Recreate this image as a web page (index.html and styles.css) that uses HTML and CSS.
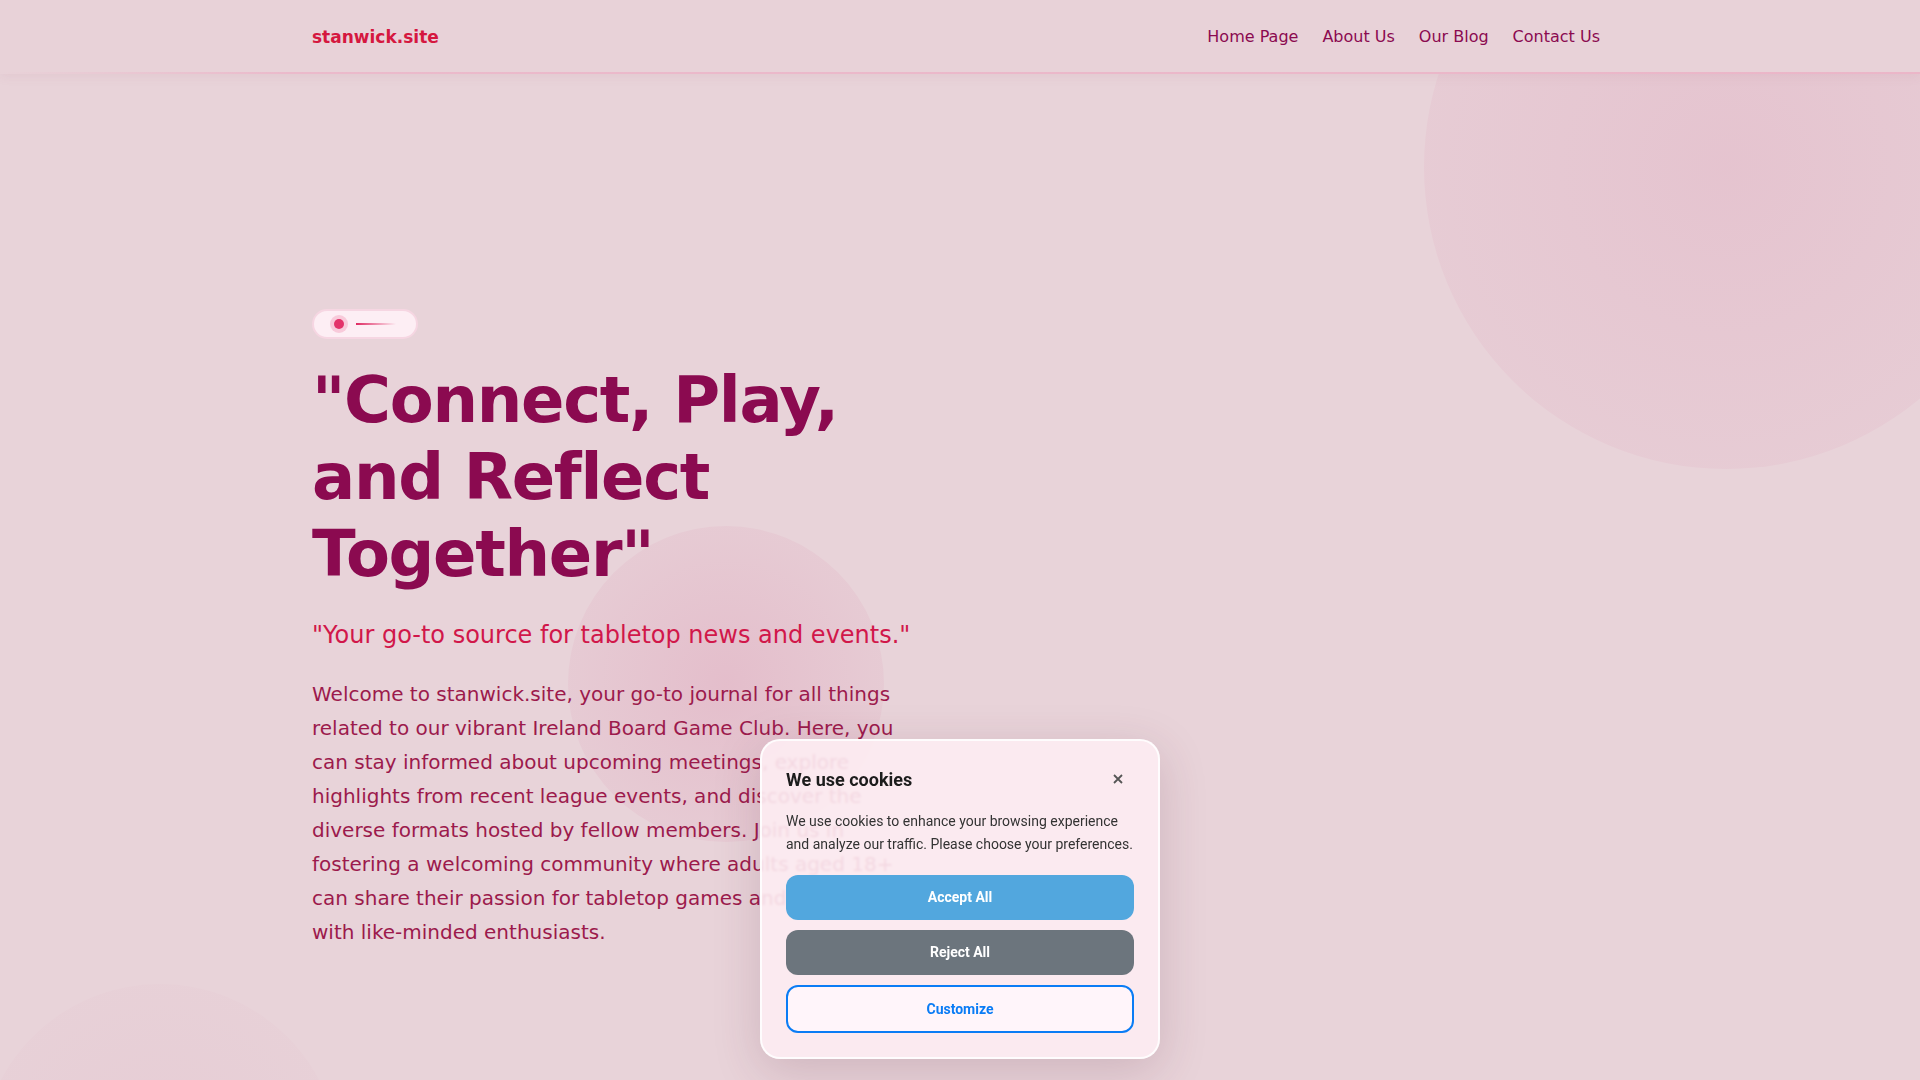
FILE: index.html
```html
<!DOCTYPE html>
<html lang="en">
<head>
  <meta charset="UTF-8" />
  <meta name="viewport" content="width=device-width, initial-scale=1" />
  <title>stanwick.site</title>
  <link rel="stylesheet" href="styles.css">
</head>
<body>
  <header class="site-header">
    <div class="container nav-bar">
      <a class="brand" href="#">stanwick.site</a>
      <nav class="nav-links">
        <a href="#">Home Page</a>
        <a href="#">About Us</a>
        <a href="#">Our Blog</a>
        <a href="#">Contact Us</a>
      </nav>
    </div>
  </header>

  <main class="hero">
    <div class="blob blob-top"></div>
    <div class="blob blob-mid"></div>
    <div class="blob blob-low"></div>

    <div class="container">
      <div class="hero-text">
        <div class="hero-badge">
          <span class="badge-dot"></span>
          <span class="badge-line"></span>
        </div>
        <h1>"Connect, Play, and Reflect Together"</h1>
        <p class="tagline">"Your go-to source for tabletop news and events."</p>
        <p class="intro">Welcome to stanwick.site, your go-to journal for all things related to our vibrant Ireland Board Game Club. Here, you can stay informed about upcoming meetings, explore highlights from recent league events, and discover the diverse formats hosted by fellow members. Join us in fostering a welcoming community where adults aged 18+ can share their passion for tabletop games and connect with like-minded enthusiasts.</p>
      </div>
    </div>
  </main>

  <div class="cookie-box">
    <div class="cookie-head">
      <h3>We use cookies</h3>
      <button class="cookie-close" aria-label="Close">
        <svg viewBox="0 0 10 10"><path d="M1 1 L9 9 M9 1 L1 9"/></svg>
      </button>
    </div>
    <p>We use cookies to enhance your browsing experience and analyze our traffic. Please choose your preferences.</p>
    <button class="btn btn-accept">Accept All</button>
    <button class="btn btn-reject">Reject All</button>
    <button class="btn btn-custom">Customize</button>
  </div>
</body>
</html>
```

FILE: styles.css
```css
* {
  box-sizing: border-box;
}

html, body {
  height: 100%;
}

body {
  margin: 0;
  background: #e8d3d9;
  color: #9a1a4a;
  font-family: 'DejaVu Sans', sans-serif;
  overflow: hidden;
}

a {
  text-decoration: none;
}

.container {
  width: 1296px;
  margin: 0 auto;
}

/* header */

.site-header {
  position: relative;
  z-index: 5;
  height: 74px;
  background: #e8d2d8;
  border-bottom: 2px solid transparent;
  border-image: linear-gradient(90deg, rgba(234, 180, 200, 0) 0%, #ebbacb 15%, #ebb6c8 100%) 1;
  box-shadow: 0 3px 10px rgba(170, 90, 120, 0.08);
}

.nav-bar {
  height: 72px;
  display: flex;
  align-items: center;
  justify-content: space-between;
}

.brand {
  color: #d5173f;
  font-weight: bold;
  font-size: 17px;
  margin-top: 2px;
}

.nav-links {
  display: flex;
  gap: 8px;
  margin-right: 8px;
}

.nav-links a {
  color: #8b0a50;
  font-size: 16px;
  padding: 8px;
}

.nav-links a:last-child {
  padding-right: 0;
}

/* hero */

.hero {
  position: relative;
  padding-top: 235px;
}

.blob {
  position: absolute;
  border-radius: 50%;
  pointer-events: none;
}

.blob-top {
  left: 1424px;
  top: -209px;
  width: 604px;
  height: 604px;
  background: radial-gradient(circle, rgba(224, 168, 190, 0.36) 0%, rgba(224, 168, 190, 0.2) 60%, rgba(224, 168, 190, 0.1) 100%);
}

.blob-mid {
  left: 568px;
  top: 452px;
  width: 316px;
  height: 316px;
  background: radial-gradient(circle, rgba(222, 160, 184, 0.42) 0%, rgba(222, 160, 184, 0.18) 65%, rgba(222, 160, 184, 0.08) 100%);
}

.blob-low {
  left: -20px;
  top: 910px;
  width: 360px;
  height: 360px;
  background: radial-gradient(circle, rgba(222, 170, 190, 0.16) 0%, rgba(222, 170, 190, 0.05) 80%, rgba(222, 170, 190, 0) 100%);
}

.hero-text {
  position: relative;
  width: 606px;
}

.hero-badge {
  display: inline-flex;
  align-items: center;
  gap: 12px;
  height: 30px;
  padding: 0 20px;
  background: #fdeef4;
  border: 2px solid #f6d6e2;
  border-radius: 15px;
}

.badge-dot {
  width: 10px;
  height: 10px;
  border-radius: 50%;
  background: #e3336a;
  box-shadow: 0 0 0 4px rgba(240, 120, 160, 0.3);
}

.badge-line {
  width: 40px;
  height: 2px;
  background: linear-gradient(90deg, #df2a62, rgba(223, 42, 98, 0));
}

h1 {
  margin: 23px 0 0;
  color: #8b0a50;
  font-size: 64px;
  line-height: 1.2;
  letter-spacing: -0.02em;
  font-weight: bold;
  width: 624px;
}

.tagline {
  margin: 25px 0 0;
  color: #d1174a;
  font-size: 24px;
  line-height: 1.5;
  white-space: nowrap;
}

.intro {
  margin: 24px 0 0;
  color: #9c1a4c;
  font-size: 20px;
  line-height: 1.7;
}

/* cookie box */

.cookie-box {
  position: fixed;
  left: 50%;
  bottom: 21px;
  z-index: 10;
  width: 400px;
  margin-left: -200px;
  padding: 23px 24px 24px;
  background: rgba(253, 236, 242, 0.9);
  backdrop-filter: blur(1px);
  border: 2px solid rgba(255, 255, 255, 0.85);
  border-radius: 20px;
  box-shadow: 0 12px 48px rgba(90, 40, 60, 0.18);
  font-family: Roboto, sans-serif;
}

.cookie-head {
  display: flex;
  align-items: center;
  justify-content: space-between;
  height: 30px;
}

.cookie-head h3 {
  margin: 0;
  color: #1c1c1c;
  font-size: 18px;
  font-weight: bold;
}

.cookie-close {
  width: 32px;
  height: 32px;
  padding: 0;
  border: none;
  background: none;
  display: flex;
  align-items: center;
  justify-content: center;
  cursor: pointer;
}

.cookie-close svg {
  width: 10px;
  height: 10px;
  stroke: #555;
  stroke-width: 1.8;
}

.cookie-box p {
  margin: 16px 0 20px;
  color: #333;
  font-size: 14px;
  line-height: 1.6;
}

.btn {
  display: block;
  width: 100%;
  padding: 12px;
  border: none;
  border-radius: 12px;
  font-family: Roboto, sans-serif;
  font-size: 14px;
  font-weight: bold;
  line-height: 21px;
  cursor: pointer;
}

.btn + .btn {
  margin-top: 10px;
}

.btn-accept {
  background: #52a7de;
  color: white;
}

.btn-reject {
  background: #6c757d;
  color: white;
}

.btn-custom {
  padding: 11.5px;
  background: rgba(255, 248, 251, 0.8);
  border: 2px solid #0a7cf5;
  color: #0a7cf5;
}
```
